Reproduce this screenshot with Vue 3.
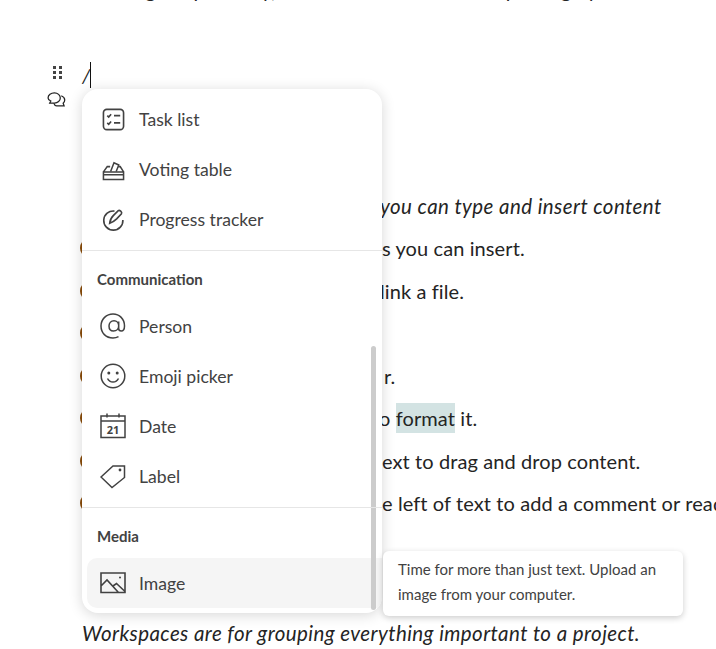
<script setup>
const lines = [
  { text: 'you can type and insert content', left: 298, italic: true, bullet: false },
  { text: 's you can insert.', left: 300, italic: false, bullet: true },
  { text: 'link a file.', left: 298, italic: false, bullet: true },
  { text: '', left: 0, italic: false, bullet: true },
  { text: 'r.', left: 302, italic: false, bullet: true },
  { text: 'o ', left: 297, italic: false, bullet: true, mark: 'format', after: ' it.' },
  { text: 'ext to drag and drop content.', left: 300, italic: false, bullet: true },
  { text: 'e left of text to add a comment or read', left: 300, italic: false, bullet: true }
]

const commItems = ['Person', 'Emoji picker', 'Date', 'Label']
</script>

<template>
  <div class="page">
    <div class="clipped-line">Using Loop weekly, this tool can handle a list posting by</div>

    <div class="slash-row">
      <div class="handles">
        <svg class="grip" width="10" height="14" viewBox="0 0 10 14">
          <rect x="0" y="0" width="3" height="3" /><rect x="6" y="0" width="3" height="3" />
          <rect x="0" y="5" width="3" height="3" /><rect x="6" y="5" width="3" height="3" />
          <rect x="0" y="10" width="3" height="3" /><rect x="6" y="10" width="3" height="3" />
        </svg>
        <svg class="comment" width="19" height="17" viewBox="0 0 18 16" fill="none" stroke="#242424" stroke-width="1.2">
          <path d="M7 .8c3.200 0 5.600 2.100 5.600 4.800s-2.400 4.800-5.600 4.800H2.600l1-1.900C1.900 7.700 1 6.800 1 5.600 1 2.900 3.800.8 7 .8Z" />
          <path d="M13.500 3.500c2 .8 3.300 2.300 3.300 4 0 1.200-.6 2.300-1.500 3l.9 2.600H9.100c-1.200 0-2-.5-2.600-2.400" />
        </svg>
      </div>
      <span class="slash">/</span><span class="caret"></span>
    </div>

    <div class="lines">
      <div v-for="(line, i) in lines" :key="i" class="line" :class="{ italic: line.italic }">
        <span v-if="line.bullet" class="bullet"></span>
        <span class="line-text" :style="{ paddingLeft: line.left + 'px' }">{{ line.text }}<template v-if="line.mark"><mark>{{ line.mark }}</mark>{{ line.after }}</template></span>
      </div>
    </div>

    <div class="footer-line italic">Workspaces are for grouping everything important to a project.</div>

    <div class="menu">
      <div class="scrollbar"></div>

      <div class="item">
        <svg class="icon" viewBox="0 0 24 24" fill="none" stroke="#424242" stroke-width="1.7">
          <rect x="1.500" y="1.500" width="21" height="21" rx="3.500" />
          <path d="M5.500 8l1.500 1.500L9.500 6.500M5.500 15.500l1.500 1.500 2.500-3M12.500 8h6.500M12.500 15.500h6.500" />
        </svg>
        <span>Task list</span>
      </div>
      <div class="item">
        <svg class="icon" viewBox="0 0 24 24" fill="none" stroke="#424242" stroke-width="1.6">
          <path d="M1.500 22.500V14.500h21v8ZM1.500 14.500l4-5.500h3M22.500 14.500l-3.500-5.500h-2M1.500 17.500h21" />
          <path d="M9 14l3.500-9 5 2.300-2.700 6.700" />
        </svg>
        <span>Voting table</span>
      </div>
      <div class="item divided">
        <svg class="icon" viewBox="0 0 24 24" fill="none" stroke="#424242" stroke-width="1.7">
          <path d="M13 3.200A10 10 0 1 0 21.800 12.500" />
          <path d="M8 16c.3-3 1.700-6 4-8.300l5-5c1.300-1 4.300 1.600 3.300 3.300l-5 5.300c-2 2-4.500 3.500-7.300 4.700Z" />
        </svg>
        <span>Progress tracker</span>
      </div>

      <div class="section-title">Communication</div>
      <div v-for="name in commItems" :key="name" class="item" :class="{ divided: name === 'Label' }">
        <svg v-if="name === 'Person'" class="icon big" viewBox="0 0 26 26" fill="none" stroke="#424242" stroke-width="1.5">
          <path d="M24.500 13c0 3-1.200 5-3.300 5-1.600 0-2.500-1-2.500-2.500V8.500M18.700 12.800c0 3-2.100 5.300-5.200 5.300-2.800 0-4.500-2.200-4.500-5 0-3 2.100-5.300 5-5.300 2.800 0 4.700 2.100 4.700 5Z" />
          <path d="M24.500 13C24.500 6 19.500 1 13 1S1 6 1 13s5 12 12 12c2.200 0 4-.5 5.500-1.300" />
        </svg>
        <svg v-else-if="name === 'Emoji picker'" class="icon big" viewBox="0 0 26 26" fill="none" stroke="#424242" stroke-width="1.5">
          <circle cx="13" cy="13" r="11.800" />
          <circle cx="8.800" cy="10" r="1.500" fill="#424242" stroke="none" />
          <circle cx="17.200" cy="10" r="1.500" fill="#424242" stroke="none" />
          <path d="M7.500 15.500c1.200 2.300 3.200 3.500 5.500 3.500s4.300-1.200 5.500-3.500" />
        </svg>
        <svg v-else-if="name === 'Date'" class="icon big" viewBox="0 0 26 26" fill="none" stroke="#424242" stroke-width="1.5">
          <path d="M1 3h24v21.500H1ZM1 8h24M7 .5v4M19 .5v4" />
          <text x="13" y="21" text-anchor="middle" class="cal-num">21</text>
        </svg>
        <svg v-else class="icon big" viewBox="0 0 26 26" fill="none" stroke="#424242" stroke-width="1.5">
          <path d="M1 14 13 3h11.500v11.500L12 24.500Z" />
          <circle cx="20" cy="7" r="1.400" fill="#424242" stroke="none" />
        </svg>
        <span>{{ name }}</span>
      </div>

      <div class="section-title media">Media</div>
      <div class="item active">
        <svg class="icon big" viewBox="0 0 26 24" fill="none" stroke="#424242" stroke-width="1.6">
          <path d="M1 2h24v19.500H1ZM1 15l6-6 11.500 12.500M13 15l3.500-2.500 8.500 8" />
          <circle cx="20" cy="6.500" r="1" fill="#424242" stroke="none" />
        </svg>
        <span>Image</span>
      </div>
    </div>

    <div class="tooltip">Time for more than just text. Upload an image from your computer.</div>
  </div>
</template>

<style scoped>
.page {
  position: relative;
  width: 716px;
  height: 649px;
  overflow: hidden;
  background: #fff;
  font-family: Lato, "Open Sans", sans-serif;
  font-size: 20px;
  letter-spacing: 0.1px;
  color: #242424;
}

.clipped-line {
  height: 0;
  padding-left: 106px;
  transform: translateY(-22px);
  white-space: nowrap;
  line-height: 24px;
}

.slash-row {
  display: flex;
  align-items: center;
  height: 30px;
  margin-top: 60px;
  padding-left: 47px;
}

.handles {
  position: relative;
  width: 35px;
  height: 30px;
}

.grip {
  position: absolute;
  left: 6px;
  top: 6px;
  fill: #444;
}

.comment {
  position: absolute;
  left: 0;
  top: 32px;
}

.slash {
  font-style: italic;
  color: #242424;
}

.caret {
  width: 1px;
  height: 26px;
  background: #111;
}

.lines {
  margin-top: 94.5px;
  display: flex;
  flex-direction: column;
}

.line {
  display: flex;
  align-items: center;
  height: 42.5px;
  padding-left: 82px;
  white-space: nowrap;
  position: relative;
}

.italic {
  font-style: italic;
  font-size: 20.5px;
  letter-spacing: 0.42px;
}

.bullet {
  position: absolute;
  left: 80px;
  top: 13px;
  width: 13px;
  height: 16px;
  border-radius: 50%;
  border: 2px solid #8a4b08;
  box-sizing: border-box;
}

mark {
  background: #d3e3e3;
  color: inherit;
  padding: 3px 0;
}

.footer-line {
  margin-top: 96px;
  padding-left: 82px;
  white-space: nowrap;
}

.menu {
  position: absolute;
  left: 82px;
  top: 89px;
  width: 300px;
  height: 524px;
  box-sizing: border-box;
  background: #fff;
  border-radius: 16px;
  box-shadow: 0 2px 14px rgba(0, 0, 0, 0.16);
  overflow: hidden;
  padding: 5px;
  color: #424242;
  letter-spacing: 0;
}

.scrollbar {
  position: absolute;
  left: 289px;
  top: 257px;
  width: 5px;
  height: 264px;
  background: #ccc;
  border-radius: 3px;
}

.item {
  display: flex;
  align-items: center;
  gap: 14px;
  height: 50px;
  padding-left: 15px;
  border-radius: 10px;
  font-size: 17.6px;
  color: #424242;
}

.divided {
  position: relative;
  margin-bottom: 24px;
}

.divided::after {
  content: "";
  position: absolute;
  left: -5px;
  right: -5px;
  bottom: -7px;
  height: 1px;
  background: #e6e6e6;
}

.active {
  background: #f5f5f5;
  width: 289px;
}

.icon {
  width: 23px;
  height: 23px;
  flex: none;
}

.big {
  width: 26px;
  height: 26px;
  margin-left: -2px;
  margin-right: -1px;
}

.cal-num {
  font-family: "Open Sans", sans-serif;
  font-size: 11px;
  font-weight: 700;
  fill: #424242;
  stroke: none;
}

.section-title {
  padding-left: 10px;
  font-size: 15px;
  font-weight: 700;
  color: #424242;
  line-height: 22px;
  margin-bottom: 11px;
}

.tooltip {
  position: absolute;
  left: 383px;
  top: 551px;
  width: 300px;
  height: 65px;
  box-sizing: border-box;
  padding: 6px 15px;
  background: #fff;
  border-radius: 6px;
  box-shadow: 0 2px 6px rgba(0, 0, 0, 0.2);
  font-size: 15px;
  line-height: 25px;
  color: #424242;
  letter-spacing: 0;
}
</style>
